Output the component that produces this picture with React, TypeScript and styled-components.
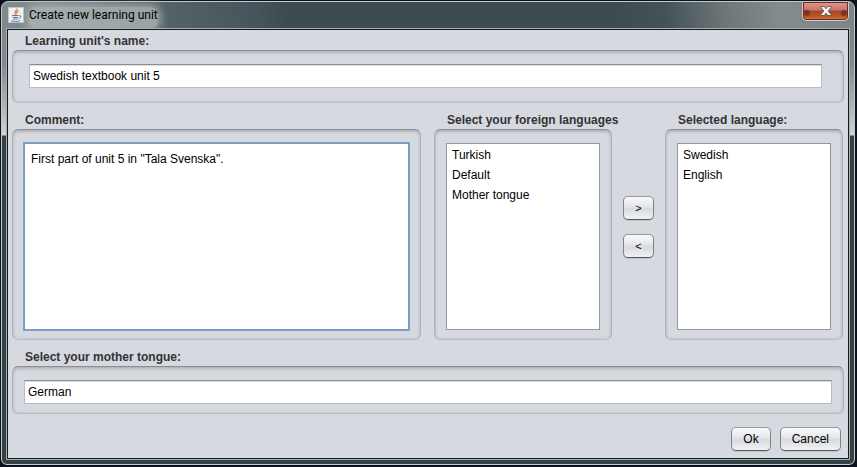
import React, { useState } from "react";
import styled, { createGlobalStyle, css } from "styled-components";

const GlobalStyle = createGlobalStyle`
  *, *::before, *::after { box-sizing: border-box; }
  html, body, #root { height: 100%; }
  body {
    margin: 0;
    background: #0b141c;
    font: 12px/16px "Liberation Sans", Arial, sans-serif;
    color: #000;
    overflow: hidden;
  }
  button, input, textarea { font: inherit; color: inherit; }
`;

const Desktop = styled.div`
  height: 100%;
  padding: 1px 2px 2px 1px;
`;

const Frame = styled.div`
  display: flex;
  flex-direction: column;
  height: 100%;
  padding: 0 5px 5px;
  border: 1px solid #c3c8c8;
  border-radius: 7px 7px 6px 6px;
  background:
    linear-gradient(180deg, transparent 133px, #344244 134px),
    linear-gradient(180deg, transparent 30px, #7f898b 60px, #bfc4c4 120px, #d3d6d6 133px),
    linear-gradient(78deg, #8b9293 0%, #7c8687 16%, #56666b 25%, #45555b 37%, #3d4b50 40%, #3d4b50 74%, #455357 80%, #6c7678 86%, #838b8d 92%, #7b8486 100%);
`;

const TitleBar = styled.header`
  display: flex;
  flex: none;
  height: 27px;
  padding-left: 1px;
`;

const TitleText = styled.h1`
  margin: 5px auto 0 5px;
  border-radius: 8px;
  background: rgba(178, 184, 184, 0.75);
  box-shadow: 0 0 8px 3px rgba(178, 184, 184, 0.75);
  font: 12px/16px Roboto, sans-serif;
`;

const JavaIcon = styled.svg`
  display: block;
  flex: none;
  margin-top: 5px;
  z-index: 1;
`;

const CloseButton = styled.button`
  display: flex;
  justify-content: center;
  align-items: center;
  width: 47px;
  height: 19px;
  padding: 0;
  border: 1px solid #d9c4c0;
  border-top: 0;
  border-radius: 0 0 5px 5px;
  background:
    radial-gradient(circle at 4px 11px, #7d302c 2px, transparent 4px),
    radial-gradient(circle at 41px 11px, #7d302c 2px, transparent 4px),
    linear-gradient(180deg, #dc998f 0, #cb766c 8px, #a8432a 9px, #b55a24 14px, #c57a50 100%);
  box-shadow: inset 0 0 0 1px #6d2c22;
`;

const Client = styled.main`
  display: flex;
  flex: 1;
  flex-direction: column;
  min-height: 0;
  padding: 4px 4px 7px;
  border: 1px solid #14191b;
  outline: 1px solid #aab3b3;
  background: #d6d9e0;
  z-index: 1;
`;

const labelText = css`
  margin: 0;
  padding: 0 0 2px 13px;
  font-size: 12px;
  font-weight: bold;
  line-height: 14px;
  color: #333;
  white-space: nowrap;
`;

const Label = styled.label`
  display: block;
  ${labelText}
`;

const ListHeading = styled.h2`
  ${labelText}
`;

const Group = styled.div<{ $pad: string; $grow?: boolean }>`
  display: flex;
  flex-direction: column;
  ${(p) => p.$grow && css`flex: 1; min-height: 0;`}
  padding: ${(p) => p.$pad};
  border: 1px solid #aeb1b7;
  border-top-color: #8c8e93;
  border-bottom-color: #bbbec4;
  border-radius: 6px;
  box-shadow: inset 0 2px 3px #b0b3b9, inset 0 0 3px #bcbfc6;
`;

const TextField = styled.input`
  width: 100%;
  height: 24px;
  padding: 0 3px;
  border: 1px solid #babcc1;
  border-top-color: #8b8d92;
  border-radius: 0;
  outline: 0;
  background: #fff;
  box-shadow: inset 0 1px #dddee0;
`;

const Comment = styled.textarea`
  flex: 1;
  width: 100%;
  padding: 7px 6px;
  border: 1px solid #8297b0;
  border-radius: 0;
  outline: 1px solid #73a4d1;
  background: #fff;
  resize: none;
`;

const Columns = styled.div`
  display: flex;
  flex: 1;
  min-height: 0;
  margin: 10px 1px 10px 0;
`;

const CommentColumn = styled.section`
  display: flex;
  flex: 1;
  flex-direction: column;
  min-width: 0;
  margin-right: 13px;
`;

const ListColumn = styled.section`
  display: flex;
  flex: none;
  flex-direction: column;
  width: 178px;
`;

const LanguageList = styled.ul`
  flex: 1;
  margin: 0;
  padding: 1px 5px;
  border: 1px solid #9297a1;
  background: #fff;
  list-style: none;
  line-height: 20px;
`;

const Transfer = styled.div`
  display: flex;
  flex: none;
  flex-direction: column;
  gap: 14px;
  width: 53px;
  padding: 83px 11px 0;
`;

const Button = styled.button`
  height: 24px;
  padding: 0 11px;
  border: 1px solid #7d8188;
  border-top-color: #95989e;
  border-bottom-color: #53575e;
  border-radius: 5px;
  background: linear-gradient(180deg, #fbfbfc 0%, #e6e8eb 40%, #d8dade 55%, #f0f2f5 100%);
  box-shadow: 0 1px #bfc2c8;
`;

const SmallButton = styled(Button)`
  padding: 0;
  font-size: 11px;
`;

const Actions = styled.footer`
  display: flex;
  justify-content: flex-end;
  gap: 9px;
  padding: 13px 3px 0;
`;

function ShuttleList({ id, title, items }: { id: string; title: string; items: string[] }) {
  return (
    <ListColumn>
      <ListHeading id={id}>{title}</ListHeading>
      <Group $pad="13px 11px 9px" $grow>
        <LanguageList aria-labelledby={id}>
          {items.map((item) => <li key={item}>{item}</li>)}
        </LanguageList>
      </Group>
    </ListColumn>
  );
}

export default function App() {
  const [available, setAvailable] = useState(["Turkish", "Default", "Mother tongue"]);
  const [selected, setSelected] = useState(["Swedish", "English"]);

  const add = () => {
    if (!available.length) return;
    setSelected([...selected, available[0]]);
    setAvailable(available.slice(1));
  };
  const remove = () => {
    if (!selected.length) return;
    setAvailable([...available, selected[selected.length - 1]]);
    setSelected(selected.slice(0, -1));
  };

  return (
    <Desktop>
      <GlobalStyle />
      <Frame>
        <TitleBar>
          <JavaIcon width="16" height="16" viewBox="0 0 16 16" aria-hidden="true">
            <rect x=".5" y=".5" width="15" height="15" fill="#eef0f1" stroke="#b9c6ce" />
            <path d="M9 1.5c1 1.8-3.2 2.7-2 5 .3.7.8 1 1 1.8M10.8 3.8C8.6 4.8 8 5.7 9 7" fill="none" stroke="#df7a2c" strokeWidth="1.2" />
            <path d="M4 8.5h6.5M4.6 10.4h5.6M5.2 12h4.4M3 13.8c2.6.8 6.5.8 9 0M11 8.7c2.6-.4 2.4 2-.3 2.8" fill="none" stroke="#4f7ea4" />
          </JavaIcon>
          <TitleText>Create new learning unit</TitleText>
          <CloseButton aria-label="Close">
            <svg width="12" height="10" viewBox="0 0 12 10" aria-hidden="true">
              <path d="M1 .5h3.2L6 2.8 7.8.5H11v1L8.2 5 11 8.5v1H7.8L6 7.2 4.2 9.5H1v-1L3.8 5 1 1.5z" fill="#f4f4f4" stroke="#584a50" strokeWidth=".8" />
            </svg>
          </CloseButton>
        </TitleBar>
        <Client>
          <Label htmlFor="name">Learning unit's name:</Label>
          <Group $pad="13px 21px 14px 16px">
            <TextField id="name" defaultValue="Swedish textbook unit 5" />
          </Group>
          <Columns>
            <CommentColumn>
              <Label htmlFor="comment">Comment:</Label>
              <Group $pad="13px 11px 9px" $grow>
                <Comment id="comment" defaultValue={'First part of unit 5 in "Tala Svenska".'} />
              </Group>
            </CommentColumn>
            <ShuttleList id="foreign" title="Select your foreign languages" items={available} />
            <Transfer>
              <SmallButton aria-label="Add language" onClick={add}>&gt;</SmallButton>
              <SmallButton aria-label="Remove language" onClick={remove}>&lt;</SmallButton>
            </Transfer>
            <ShuttleList id="selected" title="Selected language:" items={selected} />
          </Columns>
          <Label htmlFor="mother">Select your mother tongue:</Label>
          <Group $pad="13px 11px 9px">
            <TextField id="mother" defaultValue="German" />
          </Group>
          <Actions>
            <Button>Ok</Button>
            <Button>Cancel</Button>
          </Actions>
        </Client>
      </Frame>
    </Desktop>
  );
}
